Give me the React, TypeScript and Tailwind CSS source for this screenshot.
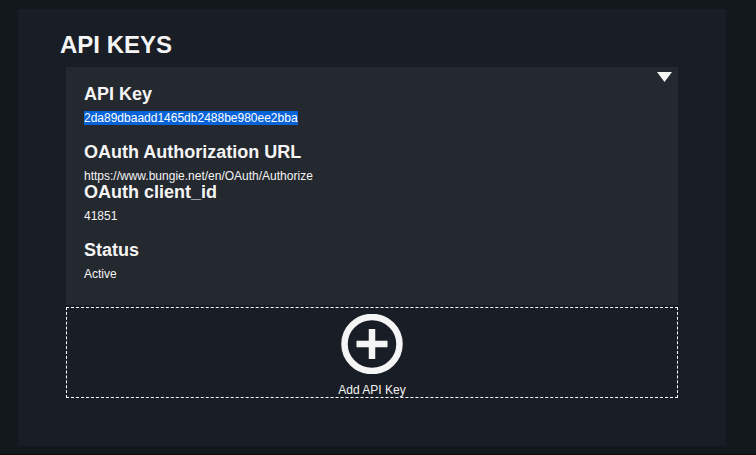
type FieldProps = { label: string; value: string; selected?: boolean; tight?: boolean };

function Field({ label, value, selected, tight }: FieldProps) {
  return (
    <div className={tight ? "" : "mb-[18px]"}>
      <h3 className="mb-2 text-[18px] leading-[18px] font-bold">{label}</h3>
      <p className="flex text-[12px] leading-[14px]">
        <span className={selected ? "bg-[#0963d8] text-white" : ""}>{value}</span>
      </p>
    </div>
  );
}

export default function App() {
  return (
    <div className="flex h-[455px] w-[756px] flex-col border-b border-[#0b0d14] bg-[#12181b] pt-[9px] pl-[18px] font-['Liberation_Sans',Arial,sans-serif] text-[#f5f5f5]">
      <main className="h-[437px] w-[708px] bg-[#191d25] pt-[22px] pl-12">
        <h2 className="-ml-1.5 mb-2 h-7 text-[24px] leading-[28px] font-bold">API KEYS</h2>
        <section className="mb-0.5 flex h-[238px] w-[612px] items-start justify-between bg-[#24282f] pt-[18px] pr-1.5 pl-[18px]">
          <div>
            <Field label="API Key" value="2da89dbaadd1465db2488be980ee2bba" selected />
            <Field label="OAuth Authorization URL" value="https://www.bungie.net/en/OAuth/Authorize" tight />
            <Field label="OAuth client_id" value="41851" />
            <Field label="Status" value="Active" />
          </div>
          <svg className="-mt-[13px]" width="15" height="10" viewBox="0 0 15 10" fill="#f5f5f5">
            <path d="M0 0H15L7.5 10Z" />
          </svg>
        </section>
        <button className="flex h-[91px] w-[612px] flex-col items-center border border-dashed border-white pt-[6px]">
          <svg width="62" height="60" viewBox="0 0 62 60" fill="none" stroke="#f5f5f5">
            <ellipse cx="31" cy="30" rx="27.5" ry="27" strokeWidth="6.5" />
            <path d="M15.5 30H46.5M31 15V45" strokeWidth="6.5" />
          </svg>
          <span className="mt-[9px] text-[12px] leading-[14px]">Add API Key</span>
        </button>
      </main>
    </div>
  );
}
